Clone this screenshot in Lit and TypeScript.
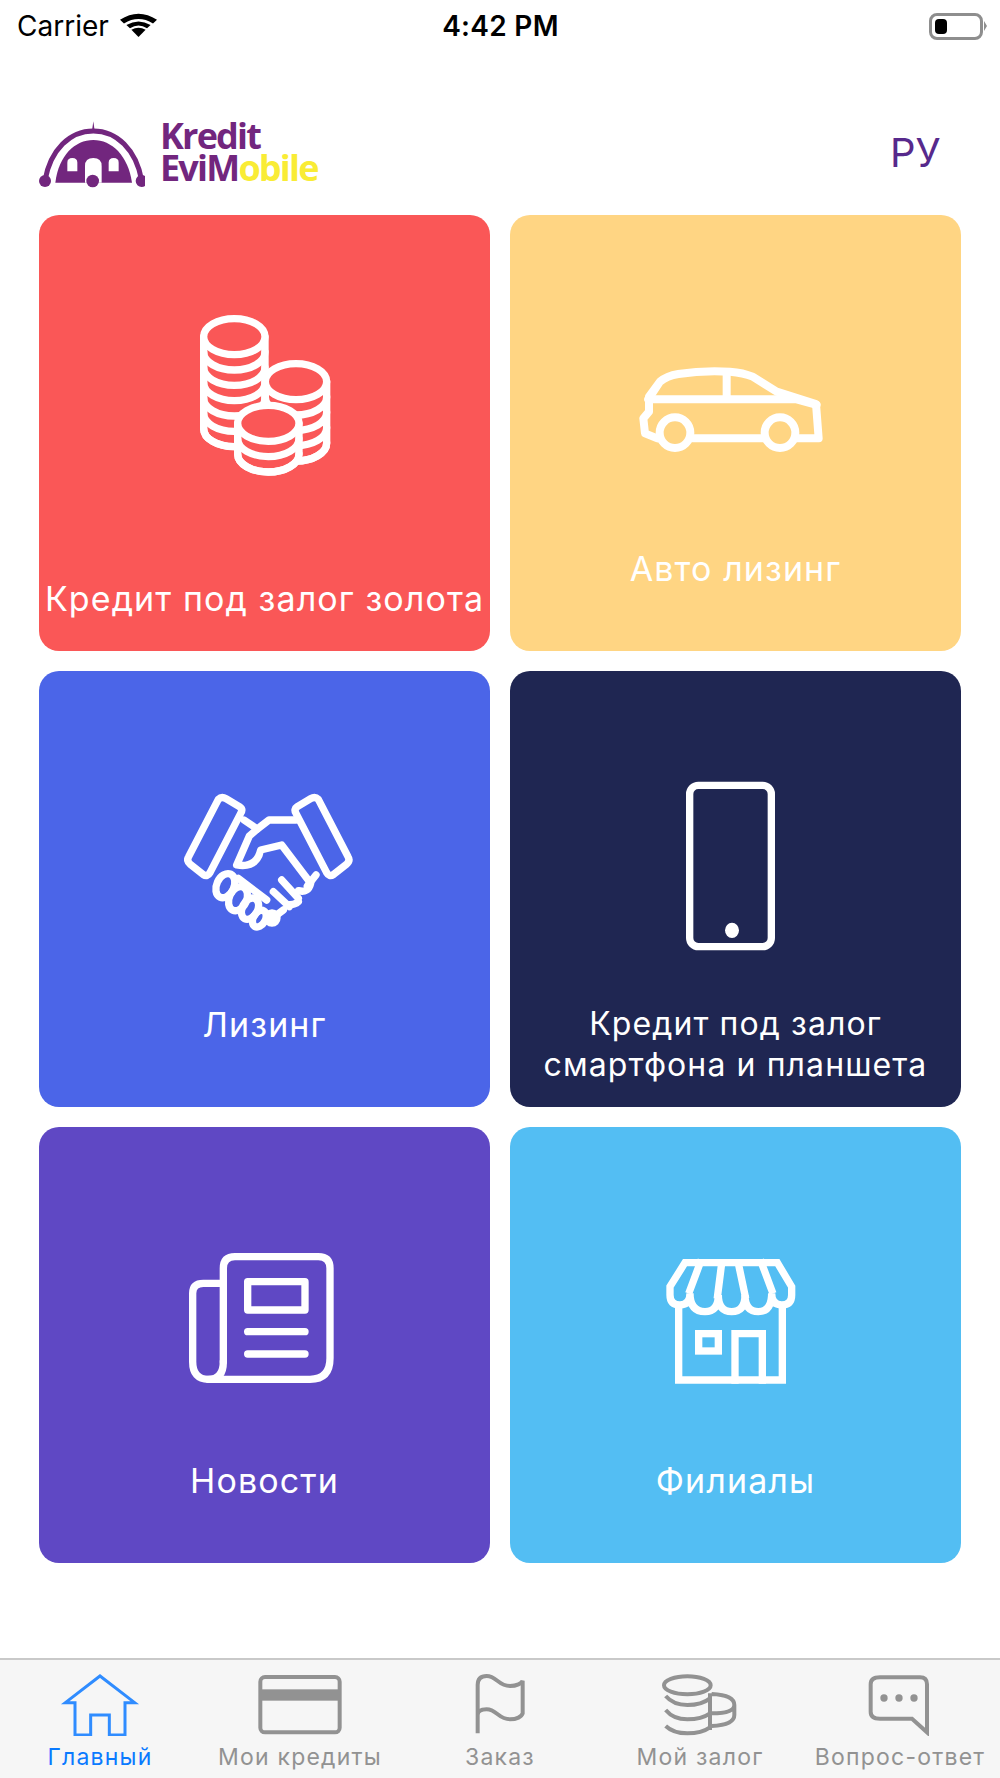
import { css, html, LitElement, svg, TemplateResult } from "lit";
import { customElement } from "lit/decorators.js";

const coinStack = (cx: number, cy: number, count: number) => {
    const rx = 92;
    const ry = 54;
    const step = 46;
    const bottom = cy + count * step;
    const arcs = [];
    for (let i = 1; i <= count; i++) {
        const y = cy + i * step;
        arcs.push(svg`<path d="M${cx - rx} ${y} A${rx} ${ry} 0 0 0 ${cx + rx} ${y}" />`);
    }
    return svg`
        <path class="mask" d="M${cx - rx} ${cy} V${bottom} A${rx} ${ry} 0 0 0 ${cx + rx} ${bottom} V${cy} Z" />
        <ellipse class="mask" cx=${cx} cy=${cy} rx=${rx} ry=${ry} />
        ${arcs}
    `;
};

const coinsIcon = svg`
    <svg class="icon coins" viewBox="0 0 540 600">
        ${coinStack(193, 140, 6)}
        ${coinStack(378, 275, 4)}
        ${coinStack(295, 400, 2)}
    </svg>
`;

const carIcon = svg`
    <svg class="icon car" viewBox="0 0 660 420">
        <path d="M85 178 L120 125 Q140 108 175 102 Q250 90 330 95 Q370 98 398 110 L470 155 L588 192 L596 295 H530 M432 295 H218 M112 295 L75 280 L70 235 L87 215 V170 L120 125" />
        <path d="M85 178 H465 L530 178 L590 195 M320 100 V178" />
        <circle cx="165" cy="278" r="46" />
        <circle cx="480" cy="278" r="46" />
    </svg>
`;

const handshakeIcon = svg`
    <svg class="icon handshake" viewBox="0 0 600 510">
        <path class="thin" d="M145 88 Q155 78 168 86 L208 110 Q220 118 212 130 L120 308 Q112 322 100 314 L62 284 Q48 272 56 260 Z" />
        <path class="thin" d="M445 88 Q435 78 422 86 L382 110 Q370 118 378 130 L470 308 Q478 322 490 314 L528 284 Q542 272 534 260 Z" />
        <path class="thin" d="M222 150 L262 177 L297 150 H378" />
        <path class="thin" d="M262 177 L238 198 L200 285 Q260 295 272 240 L335 225 L422 340 Q415 370 385 362" />
        <path class="thin" d="M438 315 L412 348" />
        <path class="thin" d="M335 330 L385 385 M310 365 L358 410 M385 395 Q375 405 350 405 M340 420 L300 450" />
        <path class="thin" d="M205 325 L290 390" />
        <ellipse class="thin" cx="166" cy="347" rx="26" ry="38" transform="rotate(25 166 347)" />
        <ellipse class="thin" cx="204" cy="386" rx="26" ry="38" transform="rotate(25 204 386)" />
        <ellipse class="thin" cx="240" cy="416" rx="23" ry="34" transform="rotate(28 240 416)" />
        <ellipse class="thin" cx="268" cy="446" rx="18" ry="27" transform="rotate(30 268 446)" />
        <circle class="thin" cx="306" cy="444" r="15" />
    </svg>
`;

const phoneIcon = svg`
    <svg class="icon phone" viewBox="0 0 360 570">
        <rect x="59" y="46" width="245" height="484" rx="26" />
        <ellipse class="solid" cx="186" cy="481" rx="21" ry="23" />
    </svg>
`;

const newsIcon = svg`
    <svg class="icon news" viewBox="0 0 540 510">
        <path d="M160 395 V115 Q160 80 195 80 H445 Q480 80 480 115 V385 Q480 448 420 448 H115 Q68 448 68 395 V190 Q68 160 100 160 H160" />
        <path d="M160 395 Q160 448 115 448" />
        <rect x="233" y="155" width="172" height="85" />
        <path d="M233 305 H405 M233 372 H405" />
    </svg>
`;

const shopIcon = svg`
    <svg class="icon shop" viewBox="0 0 480 450">
        <path d="M105 68 H382 L425 140 V165 Q425 195 395 195 Q365 195 365 160 Q365 215 325 215 Q285 215 285 165 Q285 215 245 215 Q205 215 205 165 Q205 215 165 215 Q120 215 120 160 Q120 195 90 195 Q60 195 60 165 V140 Z" />
        <path d="M150 70 L120 150 M215 70 L203 165 M265 70 L285 165 M335 70 L365 150" />
        <path d="M86 200 V420 H397 V200" />
        <rect x="146" y="281" width="59" height="52" />
        <path d="M255 420 V281 H337 V420" />
    </svg>
`;

const homeTab = svg`
    <svg viewBox="150 66 300 192">
        <path d="M225 255 V158 H196 L300 78 L404 158 H375 V255 H328 V195 H272 V255 Z" />
    </svg>
`;

const cardTab = svg`
    <svg viewBox="750 66 300 192">
        <rect x="781" y="81" width="238" height="166" rx="14" />
        <rect class="solid" x="781" y="118" width="238" height="34" />
    </svg>
`;

const flagTab = svg`
    <svg viewBox="1350 66 300 192">
        <path d="M1433 250 V105 Q1433 78 1460 78 C1490 78 1495 108 1530 108 C1550 108 1565 100 1568 92 V190 C1565 200 1550 208 1530 208 C1495 208 1490 178 1460 178 Q1433 178 1433 195" />
    </svg>
`;

const pledgeTab = svg`
    <svg viewBox="1950 66 300 192">
        <ellipse cx="2062" cy="106" rx="70" ry="27" />
        <path d="M1997 138 Q2020 165 2062 165 Q2105 165 2130 145 M1997 180 Q2020 208 2062 208 Q2105 208 2130 190 M1997 228 Q2020 250 2062 250 Q2105 250 2130 232" />
        <path d="M2130 130 V240 M2135 132 Q2203 135 2203 165 Q2203 190 2135 190 M2203 165 V195 Q2203 225 2135 228" />
    </svg>
`;

const faqTab = svg`
    <svg viewBox="2550 66 300 192">
        <path d="M2640 82 H2760 Q2781 82 2781 103 V247 L2736 206 H2640 Q2612 206 2612 185 V103 Q2612 82 2640 82 Z" />
        <circle class="solid" cx="2652" cy="144" r="11" />
        <circle class="solid" cx="2697" cy="144" r="11" />
        <circle class="solid" cx="2742" cy="144" r="11" />
    </svg>
`;

interface Tile {
    label: TemplateResult;
    icon: unknown;
    kind: string;
}

const tiles: Tile[] = [
    { label: html`Кредит под залог золота`, icon: coinsIcon, kind: "gold" },
    { label: html`Авто лизинг`, icon: carIcon, kind: "auto" },
    { label: html`Лизинг`, icon: handshakeIcon, kind: "leasing" },
    { label: html`Кредит под залог<br />смартфона и планшета`, icon: phoneIcon, kind: "gadget" },
    { label: html`Новости`, icon: newsIcon, kind: "newsfeed" },
    { label: html`Филиалы`, icon: shopIcon, kind: "branches" },
];

const tabs = [
    { label: "Главный", icon: homeTab, active: true },
    { label: "Мои кредиты", icon: cardTab, active: false },
    { label: "Заказ", icon: flagTab, active: false },
    { label: "Мой залог", icon: pledgeTab, active: false },
    { label: "Вопрос-ответ", icon: faqTab, active: false },
];

@customElement("app-root")
export class AppRoot extends LitElement {
    protected render(): TemplateResult {
        return html`
            <div class="status">
                <div class="status-left">
                    <span>Carrier</span>
                    <svg class="wifi" viewBox="5 1 26 26" preserveAspectRatio="none">
                        <path d="M18 27 L13 20 Q18 16 23 20 Z" />
                        <path d="M9.5 15.5 L12 18.5 Q18 13.5 24 18.5 L26.5 15.5 Q18 8.5 9.5 15.5 Z" />
                        <path d="M5 10.5 L7.8 14 Q18 5.5 28.2 14 L31 10.5 Q18 -1.5 5 10.5 Z" />
                    </svg>
                </div>
                <div class="time">4:42 PM</div>
                <div class="status-right">
                    <div class="battery"><div class="charge"></div></div>
                    <div class="nub"></div>
                </div>
            </div>
            <header>
                <div class="logo">
                    <svg class="dome" viewBox="0 0 345 240">
                        <path class="dome-tip" d="M190 28 L194 56 H186 Z" />
                        <path class="dome-arc" d="M45 205 C62 112 120 57 190 57 C260 57 318 112 335 205" />
                        <path class="dome-body" d="M76 212 C86 130 135 84 190 84 C245 84 294 130 306 212 Z" />
                        <path class="dome-win" d="M112 178 V152 Q112 138 127 138 Q142 138 142 152 V178 Z" />
                        <path class="dome-win" d="M236 178 V152 Q236 138 251 138 Q266 138 266 152 V178 Z" />
                        <path class="dome-win" d="M165 212 V162 Q165 138 190 138 Q215 138 215 162 V212 Z" />
                        <circle class="dome-ball" cx="45" cy="207" r="18" />
                        <circle class="dome-ball" cx="188" cy="207" r="19" />
                        <circle class="dome-ball" cx="335" cy="207" r="18" />
                    </svg>
                    <div class="brand">
                        <div>Kredit</div>
                        <div>EviM<span class="accent">obile</span></div>
                    </div>
                </div>
                <div class="lang">РУ</div>
            </header>
            <main class="tiles">
                ${tiles.map(
                    (t) => html`
                        <div class="tile ${t.kind}">
                            ${t.icon}
                            <div class="tile-label">${t.label}</div>
                        </div>
                    `
                )}
            </main>
            <nav class="tabbar">
                ${tabs.map(
                    (t) => html`
                        <div class="tab ${t.active ? "active" : ""}">
                            ${t.icon}
                            <span>${t.label}</span>
                        </div>
                    `
                )}
            </nav>
        `;
    }

    static styles = css`
        :host {
            background: #fff;
            display: flex;
            flex-direction: column;
            font-family: Inter, "Liberation Sans", sans-serif;
            height: 1778px;
            overflow: hidden;
        }
        .status {
            align-items: center;
            color: #000;
            display: flex;
            font-size: 28px;
            height: 52px;
            padding: 0 13px 0 17px;
        }
        .status-left,
        .status-right {
            align-items: center;
            display: flex;
            flex: 1;
        }
        .status-left {
            gap: 11px;
        }
        .status-right {
            justify-content: flex-end;
        }
        .wifi {
            fill: #000;
            height: 27px;
            margin-bottom: 6px;
            width: 37px;
        }
        .time {
            font-size: 28px;
            font-weight: 600;
            letter-spacing: 0.3px;
            margin-left: -3px;
        }
        .battery {
            border: 3px solid #8e8e8e;
            border-radius: 8px;
            box-sizing: border-box;
            height: 27px;
            padding: 3px;
            width: 54px;
        }
        .charge {
            background: #000;
            border-radius: 4px;
            height: 100%;
            width: 12px;
        }
        .nub {
            border-bottom: 5px solid transparent;
            border-left: 3px solid #8e8e8e;
            border-top: 5px solid transparent;
            margin-left: 1px;
        }
        header {
            align-items: center;
            display: flex;
            height: 72px;
            justify-content: space-between;
            margin-top: 64px;
            padding: 0 50px 0 39px;
        }
        .logo {
            align-items: center;
            display: flex;
            gap: 15px;
        }
        .dome {
            height: 80px;
            margin-left: -9px;
            width: 115px;
        }
        .dome-tip,
        .dome-body,
        .dome-ball {
            fill: #72267e;
        }
        .dome-win {
            fill: #fff;
        }
        .dome-arc {
            fill: none;
            stroke: #72267e;
            stroke-width: 15;
        }
        .brand {
            color: #72267e;
            font-family: "Open Sans", sans-serif;
            font-size: 36px;
            font-weight: 700;
            letter-spacing: -1.8px;
            line-height: 32px;
        }
        .accent {
            color: #f9ec35;
        }
        .lang {
            color: #57298c;
            font-size: 40px;
            width: 60px;
        }
        .tiles {
            display: grid;
            gap: 20px;
            grid-template-columns: 451px 451px;
            margin-top: 27px;
            padding: 0 39px;
        }
        .tile {
            background: var(--tile);
            border-radius: 20px;
            color: #fff;
            display: flex;
            flex-direction: column;
            height: 436px;
            overflow: hidden;
        }
        .tile-label {
            font-size: 34px;
            letter-spacing: 1.1px;
            line-height: 40px;
            margin-top: auto;
            padding-bottom: 62px;
            text-align: center;
            white-space: nowrap;
        }
        .gold {
            --tile: #fa5757;
        }
        .gold .tile-label {
            padding-bottom: 32px;
        }
        .auto {
            --tile: #ffd583;
        }
        .leasing {
            --tile: #4b65e8;
        }
        .gadget {
            --tile: #1f2652;
        }
        .gadget .tile-label {
            font-size: 32px;
            line-height: 41px;
            padding-bottom: 22px;
        }
        .newsfeed {
            --tile: #5f48c4;
        }
        .branches {
            --tile: #53bef3;
        }
        .icon {
            fill: none;
            filter: blur(0.4px);
            flex: none;
            stroke: #fff;
            stroke-linecap: round;
            stroke-linejoin: round;
            stroke-width: 22;
        }
        .icon .mask {
            fill: var(--tile);
        }
        .icon .thin {
            stroke-width: 22;
        }
        .icon .solid {
            fill: #fff;
            stroke: none;
        }
        .coins {
            height: 200px;
            margin: 75px 0 0 131px;
            width: 180px;
        }
        .car {
            height: 140px;
            margin: 125px 0 0 110px;
            stroke-width: 24;
            width: 220px;
        }
        .handshake {
            height: 170px;
            margin: 99px 0 0 131px;
            width: 200px;
        }
        .phone {
            height: 190px;
            margin: 99px 0 0 160px;
            width: 120px;
        }
        .news {
            height: 170px;
            margin: 103px 0 0 131px;
            width: 180px;
        }
        .shop {
            height: 150px;
            margin: 113px 0 0 140px;
            stroke-linecap: square;
            stroke-linejoin: miter;
            width: 160px;
        }
        .tabbar {
            background: #f6f6f6;
            border-top: 2px solid #c9c9c9;
            box-sizing: border-box;
            display: grid;
            flex: none;
            grid-template-columns: repeat(5, 1fr);
            height: 120px;
            margin-top: auto;
            padding-top: 12px;
        }
        .tab {
            align-items: center;
            color: #929292;
            display: flex;
            flex-direction: column;
            font-size: 23px;
            letter-spacing: 1.2px;
            line-height: 26px;
            white-space: nowrap;
        }
        .tab svg {
            fill: none;
            filter: blur(0.6px);
            height: 64px;
            margin-bottom: 8px;
            stroke: #929292;
            stroke-width: 12;
            width: 100px;
        }
        .tab .solid {
            fill: #929292;
            stroke: none;
        }
        .tab.active {
            color: #0a7aff;
        }
        .tab.active svg {
            stroke: #2f8cff;
            stroke-width: 9;
        }
    `;
}
